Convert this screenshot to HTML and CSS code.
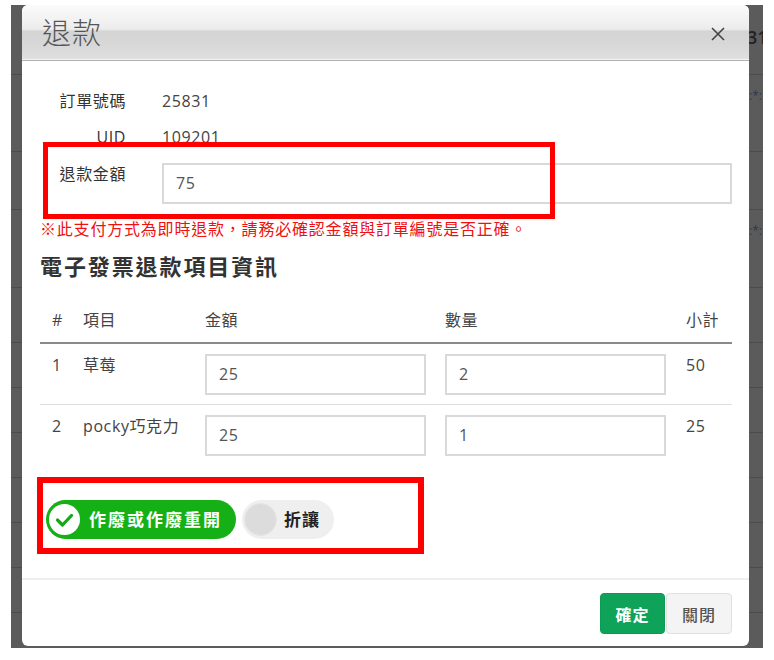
FILE: index.html
```html
<!DOCTYPE html>
<html lang="zh-Hant">
<head>
<meta charset="utf-8">
<title>退款</title>
<link rel="stylesheet" href="styles.css">
</head>
<body>
<div class="backdrop">
  <div class="bg-row r0"><span class="bg-text big">31</span></div>
  <div class="bg-row r1"><span class="bg-text">:*:</span></div>
  <div class="bg-row r2"></div>
  <div class="bg-row r3"><span class="bg-text">:*:</span></div>
  <div class="bg-row r4"></div>
  <div class="bg-row r5"></div>
  <div class="bg-row r5"></div>
  <div class="bg-row r5"></div>
  <div class="bg-row r5"></div>
  <div class="bg-row r5"></div>
  <div class="bg-row r5"></div>
  <div class="bg-row r6"></div>

  <div class="modal">
    <div class="modal-header">
      <h1 class="modal-title">退款</h1>
      <svg class="close" width="14" height="14" viewBox="0 0 14 14"><path d="M1 1 L13 13 M13 1 L1 13" stroke="#444" stroke-width="1.6" fill="none"/></svg>
    </div>
    <div class="modal-body">
      <div class="info-row"><span class="label">訂單號碼</span><span class="value">25831</span></div>
      <div class="info-row uid"><span class="label">UID</span><span class="value">109201</span></div>
      <div class="info-row amount"><span class="label">退款金額</span><div class="input wide">75</div></div>
      <p class="warning">※此支付方式為即時退款，請務必確認金額與訂單編號是否正確。</p>
      <h2 class="section-title">電子發票退款項目資訊</h2>
      <div class="table">
        <div class="tr th">
          <div class="cell">#</div><div class="cell">項目</div><div class="cell">金額</div><div class="cell">數量</div><div class="cell">小計</div>
        </div>
        <div class="tr">
          <div class="cell">1</div><div class="cell">草莓</div><div class="cell"><div class="input">25</div></div><div class="cell"><div class="input">2</div></div><div class="cell">50</div>
        </div>
        <div class="tr last">
          <div class="cell">2</div><div class="cell">pocky巧克力</div><div class="cell"><div class="input">25</div></div><div class="cell"><div class="input">1</div></div><div class="cell">25</div>
        </div>
      </div>
      <div class="toggles">
        <div class="toggle on">
          <span class="knob"><svg width="33" height="33" viewBox="0 0 33 33"><circle cx="16.5" cy="16.5" r="15.5" fill="#fff"/><path d="M9.5 17 L14.5 22 L23.5 12.5" stroke="#14a814" stroke-width="3.2" fill="none" stroke-linecap="round" stroke-linejoin="round"/></svg></span>
          <span class="toggle-text">作廢或作廢重開</span>
        </div>
        <div class="toggle off">
          <span class="knob"></span>
          <span class="toggle-text">折讓</span>
        </div>
      </div>
      <div class="mark mark-amount"></div>
      <div class="mark mark-toggles"></div>
    </div>
    <div class="modal-footer">
      <button class="btn btn-ok">確定</button><button class="btn btn-close">關閉</button>
    </div>
  </div>
</div>
</body>
</html>
```
FILE: styles.css
```css
* { box-sizing: border-box; }
html, body { margin: 0; padding: 0; background: #fff; }
body {
  font-family: "Open Sans", "Noto Sans CJK TC", sans-serif;
  font-size: 16px;
  color: #333;
  letter-spacing: 0.6px;
}
.backdrop {
  position: relative;
  margin: 5px 0 0 11px;
  width: 752px;
  height: 643px;
  background: #5b5b5b;
  overflow: hidden;
}
.bg-row {
  position: relative;
  border-bottom: 1px solid #4c4c4c;
  white-space: nowrap;
}
.r0 { height: 70px; }
.r1 { height: 77px; }
.r2 { height: 58px; }
.r3 { height: 78px; }
.r4 { height: 55px; }
.r5 { height: 45px; }
.r6 { height: 36px; }
.bg-text {
  display: block;
  padding-left: 738px;
  color: #2b3a4a;
  font-size: 12px;
  padding-top: 12px;
  letter-spacing: 0;
}
.bg-text.big { font-size: 18px; padding-top: 20px; color: #222; font-weight: 600; padding-left: 736px; }

.modal {
  position: absolute;
  left: 11px;
  top: 0;
  width: 727px;
  height: 641px;
  background: #fff;
  border-radius: 6px;
  overflow: hidden;
  display: flex;
  flex-direction: column;
}
.modal-header {
  height: 56px;
  display: flex;
  align-items: center;
  justify-content: space-between;
  padding: 0 24px 0 20px;
  background: linear-gradient(#fbfbfb 0%, #ececec 44%, #d4d4d4 48%, #d8d8d8 75%, #e0e0e0 100%);
  border-bottom: 1px solid #b0b0b0;
  box-shadow: inset 0 -1px 0 #f4f4f4;
}
.modal-title {
  margin: 0;
  font-family: "Noto Sans CJK TC", sans-serif;
  font-weight: 300;
  font-size: 29px;
  line-height: 36px;
  color: #555;
  letter-spacing: 1px;
  padding-bottom: 4px;
}
.close { margin-top: 2px; }

.modal-body {
  position: relative;
  flex: 1;
  padding: 29px 17px 0 18px;
  border-bottom: 2px solid #efefef;
}
.info-row {
  display: flex;
  align-items: flex-start;
  line-height: 22px;
}
.info-row + .info-row { margin-top: 14px; }
.info-row.amount { margin-top: 15px; }
.label {
  width: 122px;
  padding-right: 36px;
  text-align: right;
  color: #333;
  flex: none;
}
.value { color: #444; }
.input {
  height: 41px;
  border: 2px solid #d9d9d9;
  padding: 0 12px;
  line-height: 37px;
  color: #555;
  width: 221px;
}
.input.wide { width: 570px; }
.warning {
  margin: 14px 0 0;
  line-height: 22px;
  color: #f01010;
  font-size: 16px;
  letter-spacing: 0.8px;
}
.section-title {
  margin: 11px 0 0;
  font-size: 22px;
  line-height: 30px;
  font-weight: 700;
  color: #333;
  letter-spacing: 1.9px;
}
.table { margin-top: 17px; width: 692px; }
.tr {
  display: grid;
  grid-template-columns: 31px 122px 240px 241px 58px;
  border-bottom: 1px solid #dedede;
}
.tr.last { border-bottom: 0; }
.tr.th { border-bottom: 2px solid #8a8a8a; }
.cell {
  padding: 10px 0 10px 12px;
  line-height: 22px;
  color: #444;
}
.th .cell { padding: 11px 0 11px 12px; color: #444; }
.tr:not(.th) { height: 61px; }

.toggles {
  margin-top: 34px;
  display: flex;
  gap: 6px;
  padding-left: 6px;
}
.toggle {
  height: 39px;
  border-radius: 20px;
  display: flex;
  align-items: center;
  padding: 0 13px 0 2px;
  font-weight: 700;
  font-size: 17px;
  letter-spacing: 2px;
  white-space: nowrap;
  flex: none;
}
.toggle.on { background: #15b015; color: #fff; width: 190px; }
.toggle.off { background: #efefef; color: #222; width: 92px; padding-right: 8px; }
.knob {
  width: 33px;
  height: 33px;
  border-radius: 50%;
  flex: none;
  display: block;
}
.knob svg { display: block; }
.toggle.off .knob { background: #dcdcdc; border: 1px solid #e6e6e6; }
.toggle-text { margin-left: 8px; line-height: 22px; }
.toggle.off .toggle-text { margin-left: 7px; letter-spacing: 1px; }

.mark {
  position: absolute;
  border: 5px solid #ff0000;
}
.mark-amount { left: 21px; top: 81px; width: 512px; height: 77px; }
.mark-toggles { left: 15px; top: 416px; width: 387px; height: 77px; border-width: 6px; }

.modal-footer {
  display: flex;
  justify-content: flex-end;
  padding: 13px 17px 12px;
}
.btn {
  height: 41px;
  width: 65px;
  border-radius: 4px;
  font-family: "Noto Sans CJK TC", sans-serif;
  font-size: 16px;
  letter-spacing: 1px;
  font-weight: 700;
  cursor: pointer;
}
.btn-ok { background: #0fa35a; color: #fff; border: 1px solid #0d9a53; }
.btn-close { background: #f4f4f4; color: #555; border: 1px solid #e0e0e0; margin-left: 1px; width: 66px; font-weight: 500; }
```
